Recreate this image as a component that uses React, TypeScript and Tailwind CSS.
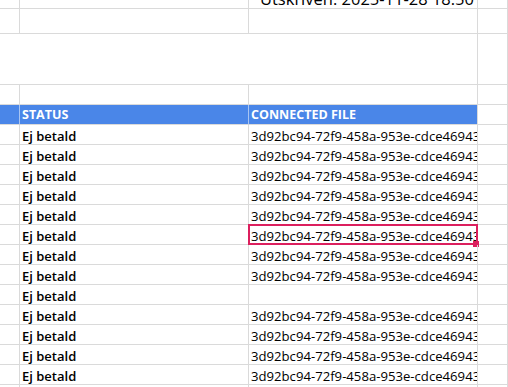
import React from "react";

const HEX = "3d92bc94-72f9-458a-953e-cdce46943";
const G = "border-[#dadada]";

function Cell({ className = "", children }: { className?: string; children?: React.ReactNode }) {
  return (
    <div className={`border-r border-b ${G} overflow-hidden whitespace-nowrap flex items-end ${className}`}>
      {children}
    </div>
  );
}

export default function App() {
  const rows = [true, true, true, true, true, true, true, true, false, true, true, true, true, true];
  return (
    <div className="w-[508px] h-[387px] overflow-hidden bg-white font-['Open_Sans',sans-serif] text-black">
      <div className="grid grid-cols-[20px_229px_229px_1fr]">
        {/* top partial row */}
        <Cell className="h-[9px]" />
        <Cell className="h-[9px]" />
        <Cell className="h-[9px] justify-end pr-[3px]">
          <span className="text-[16.5px] leading-4 pb-[1px]">Utskriven: 2025-11-28 18:50</span>
        </Cell>
        <Cell className="h-[9px]" />

        <Cell className="h-[25px]" />
        <Cell className="h-[25px]" />
        <Cell className="h-[25px]" />
        <Cell className="h-[25px]" />

        <Cell className="h-[51px] col-span-3" />
        <Cell className="h-[51px]" />

        <Cell className="h-[20px]" />
        <Cell className="h-[20px]" />
        <Cell className="h-[20px]" />
        <Cell className="h-[20px]" />

        {/* header */}
        <Cell className="h-[20px] bg-[#4a86e8] border-r-[#a9c5f2]" />
        <Cell className="h-[20px] bg-[#4a86e8] border-r-[#a9c5f2] pl-[2px]">
          <span className="text-[12.5px] leading-4 font-bold text-white pb-[1px]">STATUS</span>
        </Cell>
        <Cell className="h-[20px] bg-[#4a86e8] pl-[2px]">
          <span className="text-[12.5px] leading-4 font-bold text-white pb-[1px]">CONNECTED FILE</span>
        </Cell>
        <Cell className="h-[20px]" />

        {rows.map((hasFile, i) => (
          <React.Fragment key={i}>
            <Cell className="h-[20px]" />
            <Cell className="h-[20px] pl-[2px]">
              <span className="text-[13px] leading-4 font-semibold">Ej betald</span>
            </Cell>
            <div className={`relative h-[20px] border-r border-b ${G}`}>
              <div className="h-full overflow-hidden whitespace-nowrap flex items-end pl-[2px]">
                {hasFile && <span className="text-[13.15px] leading-4 shrink-0">{HEX}</span>}
              </div>
              {i === 5 && (
                <>
                  <div className="absolute left-[-1px] top-[-1px] w-[230px] h-[21px] border-2 border-[#dc1f5e]" />
                  <div className="absolute left-[224px] top-[16px] w-[6px] h-[6px] bg-[#dc1f5e]" />
                </>
              )}
            </div>
            <Cell className="h-[20px]" />
          </React.Fragment>
        ))}
      </div>
    </div>
  );
}
